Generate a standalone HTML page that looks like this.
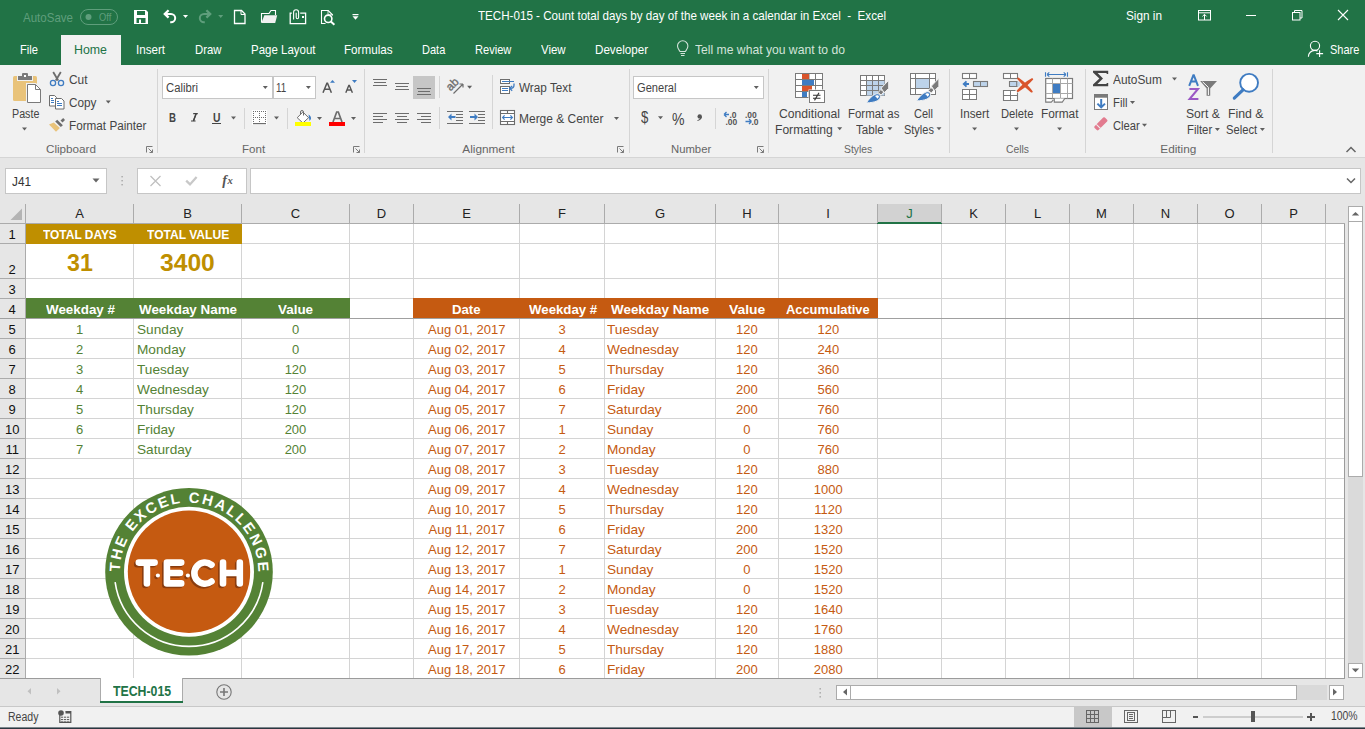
<!DOCTYPE html><html><head><meta charset="utf-8"><style>
html,body{margin:0;padding:0}
body{width:1365px;height:729px;position:relative;overflow:hidden;background:#fff;font-family:"Liberation Sans",sans-serif;-webkit-font-smoothing:antialiased}
body>div,body>svg{position:absolute}
.t{position:absolute;white-space:pre}
</style></head><body>
<div style="left:0px;top:0px;width:1365px;height:65px;background:#217346;"></div>
<div class="t" style="left:23.00px;top:10.90px;font-size:13px;line-height:13px;color:#5f9e7c;transform:scaleX(0.8873);transform-origin:0 0;">AutoSave</div>
<div class="t" style="left:99.40px;top:12.73px;font-size:10px;line-height:10px;color:#5f9e7c;transform:scaleX(0.9318);transform-origin:0 0;">Off</div>
<div class="t" style="left:478.00px;top:9.40px;font-size:13px;line-height:13px;color:#ffffff;transform:scaleX(0.8935);transform-origin:0 0;">TECH-015 - Count total days by day of the week in a calendar in Excel  -  Excel</div>
<div class="t" style="left:1126.00px;top:9.40px;font-size:13px;line-height:13px;color:#ffffff;transform:scaleX(0.9057);transform-origin:0 0;">Sign in</div>
<div style="left:61px;top:35px;width:60px;height:30px;background:#f1f1f1;"></div>
<div class="t" style="left:20.00px;top:42.90px;font-size:13px;line-height:13px;color:#ffffff;transform:scaleX(0.8592);transform-origin:0 0;">File</div>
<div class="t" style="left:74.00px;top:42.90px;font-size:13px;line-height:13px;color:#217346;transform:scaleX(0.9510);transform-origin:0 0;">Home</div>
<div class="t" style="left:136.00px;top:42.90px;font-size:13px;line-height:13px;color:#ffffff;transform:scaleX(0.8923);transform-origin:0 0;">Insert</div>
<div class="t" style="left:194.50px;top:42.90px;font-size:13px;line-height:13px;color:#ffffff;transform:scaleX(0.8717);transform-origin:0 0;">Draw</div>
<div class="t" style="left:250.50px;top:42.90px;font-size:13px;line-height:13px;color:#ffffff;transform:scaleX(0.8836);transform-origin:0 0;">Page Layout</div>
<div class="t" style="left:344.00px;top:42.90px;font-size:13px;line-height:13px;color:#ffffff;transform:scaleX(0.8967);transform-origin:0 0;">Formulas</div>
<div class="t" style="left:422.30px;top:42.90px;font-size:13px;line-height:13px;color:#ffffff;transform:scaleX(0.8473);transform-origin:0 0;">Data</div>
<div class="t" style="left:475.40px;top:42.90px;font-size:13px;line-height:13px;color:#ffffff;transform:scaleX(0.8525);transform-origin:0 0;">Review</div>
<div class="t" style="left:541.00px;top:42.90px;font-size:13px;line-height:13px;color:#ffffff;transform:scaleX(0.8821);transform-origin:0 0;">View</div>
<div class="t" style="left:595.00px;top:42.90px;font-size:13px;line-height:13px;color:#ffffff;transform:scaleX(0.8945);transform-origin:0 0;">Developer</div>
<div class="t" style="left:694.50px;top:42.90px;font-size:13px;line-height:13px;color:#d3e3da;transform:scaleX(0.9345);transform-origin:0 0;">Tell me what you want to do</div>
<div class="t" style="left:1330.00px;top:42.90px;font-size:13px;line-height:13px;color:#ffffff;transform:scaleX(0.8444);transform-origin:0 0;">Share</div>
<div style="left:0px;top:65px;width:1365px;height:92px;background:#f1f1f1;"></div>
<div style="left:0px;top:157px;width:1365px;height:1px;background:#d5d5d5;"></div>
<div style="left:0px;top:158px;width:1365px;height:46px;background:#e6e6e6;"></div>
<div style="left:5px;top:168px;width:102px;height:26px;background:#fff;border:1px solid #c6c6c6;box-sizing:border-box"></div>
<div style="left:137px;top:168px;width:110px;height:26px;background:#fff;border:1px solid #c6c6c6;box-sizing:border-box"></div>
<div style="left:250px;top:168px;width:111px;height:26px;background:#fff;border:1px solid #c6c6c6;box-sizing:border-box;width:1111px"></div>
<div class="t" style="left:12.00px;top:175.00px;font-size:13px;line-height:13px;color:#333;transform:scaleX(0.9069);transform-origin:0 0;">J41</div>
<div style="left:0px;top:204px;width:1348px;height:19px;background:#e6e6e6;"></div>
<div style="left:877px;top:204px;width:64px;height:19px;background:#d2d2d2;"></div>
<div style="left:0px;top:223px;width:1345px;height:1px;background:#ababab;"></div>
<div style="left:877px;top:222px;width:65px;height:2px;background:#217346;"></div>
<div style="left:0px;top:224px;width:25px;height:454px;background:#e6e6e6;"></div>
<div style="left:25px;top:204px;width:1px;height:474px;background:#ababab;"></div>
<div style="left:26px;top:224px;width:1318px;height:454px;background:#fff;"></div>
<div style="left:133px;top:224px;width:1px;height:454px;background:#d4d4d4;"></div>
<div style="left:133px;top:204px;width:1px;height:19px;background:#ababab;"></div>
<div style="left:241px;top:224px;width:1px;height:454px;background:#d4d4d4;"></div>
<div style="left:241px;top:204px;width:1px;height:19px;background:#ababab;"></div>
<div style="left:349px;top:224px;width:1px;height:454px;background:#d4d4d4;"></div>
<div style="left:349px;top:204px;width:1px;height:19px;background:#ababab;"></div>
<div style="left:413px;top:224px;width:1px;height:454px;background:#d4d4d4;"></div>
<div style="left:413px;top:204px;width:1px;height:19px;background:#ababab;"></div>
<div style="left:519px;top:224px;width:1px;height:454px;background:#d4d4d4;"></div>
<div style="left:519px;top:204px;width:1px;height:19px;background:#ababab;"></div>
<div style="left:604px;top:224px;width:1px;height:454px;background:#d4d4d4;"></div>
<div style="left:604px;top:204px;width:1px;height:19px;background:#ababab;"></div>
<div style="left:715px;top:224px;width:1px;height:454px;background:#d4d4d4;"></div>
<div style="left:715px;top:204px;width:1px;height:19px;background:#ababab;"></div>
<div style="left:778px;top:224px;width:1px;height:454px;background:#d4d4d4;"></div>
<div style="left:778px;top:204px;width:1px;height:19px;background:#ababab;"></div>
<div style="left:877px;top:224px;width:1px;height:454px;background:#d4d4d4;"></div>
<div style="left:877px;top:204px;width:1px;height:19px;background:#ababab;"></div>
<div style="left:941px;top:224px;width:1px;height:454px;background:#d4d4d4;"></div>
<div style="left:941px;top:204px;width:1px;height:19px;background:#ababab;"></div>
<div style="left:1005px;top:224px;width:1px;height:454px;background:#d4d4d4;"></div>
<div style="left:1005px;top:204px;width:1px;height:19px;background:#ababab;"></div>
<div style="left:1069px;top:224px;width:1px;height:454px;background:#d4d4d4;"></div>
<div style="left:1069px;top:204px;width:1px;height:19px;background:#ababab;"></div>
<div style="left:1133px;top:224px;width:1px;height:454px;background:#d4d4d4;"></div>
<div style="left:1133px;top:204px;width:1px;height:19px;background:#ababab;"></div>
<div style="left:1197px;top:224px;width:1px;height:454px;background:#d4d4d4;"></div>
<div style="left:1197px;top:204px;width:1px;height:19px;background:#ababab;"></div>
<div style="left:1261px;top:224px;width:1px;height:454px;background:#d4d4d4;"></div>
<div style="left:1261px;top:204px;width:1px;height:19px;background:#ababab;"></div>
<div style="left:1325px;top:224px;width:1px;height:454px;background:#d4d4d4;"></div>
<div style="left:1325px;top:204px;width:1px;height:19px;background:#ababab;"></div>
<div style="left:26px;top:243px;width:1318px;height:1px;background:#d4d4d4;"></div>
<div style="left:0px;top:243px;width:25px;height:1px;background:#ababab;"></div>
<div style="left:26px;top:278px;width:1318px;height:1px;background:#d4d4d4;"></div>
<div style="left:0px;top:278px;width:25px;height:1px;background:#ababab;"></div>
<div style="left:26px;top:298px;width:1318px;height:1px;background:#d4d4d4;"></div>
<div style="left:0px;top:298px;width:25px;height:1px;background:#ababab;"></div>
<div style="left:26px;top:318px;width:1318px;height:1px;background:#d4d4d4;"></div>
<div style="left:0px;top:318px;width:25px;height:1px;background:#ababab;"></div>
<div style="left:26px;top:338px;width:1318px;height:1px;background:#d4d4d4;"></div>
<div style="left:0px;top:338px;width:25px;height:1px;background:#ababab;"></div>
<div style="left:26px;top:358px;width:1318px;height:1px;background:#d4d4d4;"></div>
<div style="left:0px;top:358px;width:25px;height:1px;background:#ababab;"></div>
<div style="left:26px;top:378px;width:1318px;height:1px;background:#d4d4d4;"></div>
<div style="left:0px;top:378px;width:25px;height:1px;background:#ababab;"></div>
<div style="left:26px;top:398px;width:1318px;height:1px;background:#d4d4d4;"></div>
<div style="left:0px;top:398px;width:25px;height:1px;background:#ababab;"></div>
<div style="left:26px;top:418px;width:1318px;height:1px;background:#d4d4d4;"></div>
<div style="left:0px;top:418px;width:25px;height:1px;background:#ababab;"></div>
<div style="left:26px;top:438px;width:1318px;height:1px;background:#d4d4d4;"></div>
<div style="left:0px;top:438px;width:25px;height:1px;background:#ababab;"></div>
<div style="left:26px;top:458px;width:1318px;height:1px;background:#d4d4d4;"></div>
<div style="left:0px;top:458px;width:25px;height:1px;background:#ababab;"></div>
<div style="left:26px;top:478px;width:1318px;height:1px;background:#d4d4d4;"></div>
<div style="left:0px;top:478px;width:25px;height:1px;background:#ababab;"></div>
<div style="left:26px;top:498px;width:1318px;height:1px;background:#d4d4d4;"></div>
<div style="left:0px;top:498px;width:25px;height:1px;background:#ababab;"></div>
<div style="left:26px;top:518px;width:1318px;height:1px;background:#d4d4d4;"></div>
<div style="left:0px;top:518px;width:25px;height:1px;background:#ababab;"></div>
<div style="left:26px;top:538px;width:1318px;height:1px;background:#d4d4d4;"></div>
<div style="left:0px;top:538px;width:25px;height:1px;background:#ababab;"></div>
<div style="left:26px;top:558px;width:1318px;height:1px;background:#d4d4d4;"></div>
<div style="left:0px;top:558px;width:25px;height:1px;background:#ababab;"></div>
<div style="left:26px;top:578px;width:1318px;height:1px;background:#d4d4d4;"></div>
<div style="left:0px;top:578px;width:25px;height:1px;background:#ababab;"></div>
<div style="left:26px;top:598px;width:1318px;height:1px;background:#d4d4d4;"></div>
<div style="left:0px;top:598px;width:25px;height:1px;background:#ababab;"></div>
<div style="left:26px;top:618px;width:1318px;height:1px;background:#d4d4d4;"></div>
<div style="left:0px;top:618px;width:25px;height:1px;background:#ababab;"></div>
<div style="left:26px;top:638px;width:1318px;height:1px;background:#d4d4d4;"></div>
<div style="left:0px;top:638px;width:25px;height:1px;background:#ababab;"></div>
<div style="left:26px;top:658px;width:1318px;height:1px;background:#d4d4d4;"></div>
<div style="left:0px;top:658px;width:25px;height:1px;background:#ababab;"></div>
<div style="left:26px;top:678px;width:1318px;height:1px;background:#d4d4d4;"></div>
<div style="left:0px;top:678px;width:25px;height:1px;background:#ababab;"></div>
<div style="left:1344px;top:224px;width:1px;height:455px;background:#9b9b9b;"></div>
<div style="left:0px;top:678px;width:1345px;height:1px;background:#9b9b9b;"></div>
<div style="left:0px;top:318px;width:1345px;height:1px;background:#a0a0a0;"></div>
<div class="t" style="left:75.17px;top:207.00px;font-size:13px;line-height:13px;color:#222;">A</div>
<div class="t" style="left:183.18px;top:207.00px;font-size:13px;line-height:13px;color:#222;">B</div>
<div class="t" style="left:290.80px;top:207.00px;font-size:13px;line-height:13px;color:#222;">C</div>
<div class="t" style="left:376.80px;top:207.00px;font-size:13px;line-height:13px;color:#222;">D</div>
<div class="t" style="left:462.18px;top:207.00px;font-size:13px;line-height:13px;color:#222;">E</div>
<div class="t" style="left:558.02px;top:207.00px;font-size:13px;line-height:13px;color:#222;">F</div>
<div class="t" style="left:654.95px;top:207.00px;font-size:13px;line-height:13px;color:#222;">G</div>
<div class="t" style="left:742.30px;top:207.00px;font-size:13px;line-height:13px;color:#222;">H</div>
<div class="t" style="left:826.20px;top:207.00px;font-size:13px;line-height:13px;color:#222;">I</div>
<div class="t" style="left:906.25px;top:207.00px;font-size:13px;line-height:13px;color:#217346;">J</div>
<div class="t" style="left:969.17px;top:207.00px;font-size:13px;line-height:13px;color:#222;">K</div>
<div class="t" style="left:1033.88px;top:207.00px;font-size:13px;line-height:13px;color:#222;">L</div>
<div class="t" style="left:1096.08px;top:207.00px;font-size:13px;line-height:13px;color:#222;">M</div>
<div class="t" style="left:1160.80px;top:207.00px;font-size:13px;line-height:13px;color:#222;">N</div>
<div class="t" style="left:1224.45px;top:207.00px;font-size:13px;line-height:13px;color:#222;">O</div>
<div class="t" style="left:1289.17px;top:207.00px;font-size:13px;line-height:13px;color:#222;">P</div>
<div class="t" style="left:8.57px;top:227.50px;font-size:13px;line-height:13px;color:#111;">1</div>
<div class="t" style="left:8.57px;top:262.50px;font-size:13px;line-height:13px;color:#111;">2</div>
<div class="t" style="left:8.57px;top:282.50px;font-size:13px;line-height:13px;color:#111;">3</div>
<div class="t" style="left:8.57px;top:302.50px;font-size:13px;line-height:13px;color:#111;">4</div>
<div class="t" style="left:8.57px;top:322.50px;font-size:13px;line-height:13px;color:#111;">5</div>
<div class="t" style="left:8.57px;top:342.50px;font-size:13px;line-height:13px;color:#111;">6</div>
<div class="t" style="left:8.57px;top:362.50px;font-size:13px;line-height:13px;color:#111;">7</div>
<div class="t" style="left:8.57px;top:382.50px;font-size:13px;line-height:13px;color:#111;">8</div>
<div class="t" style="left:8.57px;top:402.50px;font-size:13px;line-height:13px;color:#111;">9</div>
<div class="t" style="left:4.97px;top:422.50px;font-size:13px;line-height:13px;color:#111;">10</div>
<div class="t" style="left:5.45px;top:442.50px;font-size:13px;line-height:13px;color:#111;">11</div>
<div class="t" style="left:4.97px;top:462.50px;font-size:13px;line-height:13px;color:#111;">12</div>
<div class="t" style="left:4.97px;top:482.50px;font-size:13px;line-height:13px;color:#111;">13</div>
<div class="t" style="left:4.97px;top:502.50px;font-size:13px;line-height:13px;color:#111;">14</div>
<div class="t" style="left:4.97px;top:522.50px;font-size:13px;line-height:13px;color:#111;">15</div>
<div class="t" style="left:4.97px;top:542.50px;font-size:13px;line-height:13px;color:#111;">16</div>
<div class="t" style="left:4.97px;top:562.50px;font-size:13px;line-height:13px;color:#111;">17</div>
<div class="t" style="left:4.97px;top:582.50px;font-size:13px;line-height:13px;color:#111;">18</div>
<div class="t" style="left:4.97px;top:602.50px;font-size:13px;line-height:13px;color:#111;">19</div>
<div class="t" style="left:4.97px;top:622.50px;font-size:13px;line-height:13px;color:#111;">20</div>
<div class="t" style="left:4.97px;top:642.50px;font-size:13px;line-height:13px;color:#111;">21</div>
<div class="t" style="left:4.97px;top:662.50px;font-size:13px;line-height:13px;color:#111;">22</div>
<div style="left:26px;top:224px;width:216px;height:20px;background:#bf8f00;"></div>
<div style="left:26px;top:298px;width:324px;height:20px;background:#548235;"></div>
<div style="left:413px;top:298px;width:465px;height:20px;background:#c55a11;"></div>
<div class="t" style="left:42.70px;top:228.00px;font-size:13px;line-height:13px;color:#ffffff;font-weight:bold;transform:scaleX(0.9179);transform-origin:0 0;">TOTAL DAYS</div>
<div class="t" style="left:146.70px;top:228.00px;font-size:13px;line-height:13px;color:#ffffff;font-weight:bold;transform:scaleX(0.9278);transform-origin:0 0;">TOTAL VALUE</div>
<div class="t" style="left:66.60px;top:250.68px;font-size:24px;line-height:24px;color:#bf8f00;font-weight:bold;transform:scaleX(0.9663);transform-origin:0 0;">31</div>
<div class="t" style="left:160.40px;top:250.68px;font-size:24px;line-height:24px;color:#bf8f00;font-weight:bold;transform:scaleX(1.0262);transform-origin:0 0;">3400</div>
<div class="t" style="left:45.60px;top:303.00px;font-size:13px;line-height:13px;color:#ffffff;font-weight:bold;transform:scaleX(1.0291);transform-origin:0 0;">Weekday #</div>
<div class="t" style="left:138.60px;top:303.00px;font-size:13px;line-height:13px;color:#ffffff;font-weight:bold;transform:scaleX(1.0300);transform-origin:0 0;">Weekday Name</div>
<div class="t" style="left:278.40px;top:303.00px;font-size:13px;line-height:13px;color:#ffffff;font-weight:bold;transform:scaleX(1.0309);transform-origin:0 0;">Value</div>
<div class="t" style="left:75.88px;top:323.00px;font-size:13px;line-height:13px;color:#548235;">1</div>
<div class="t" style="left:136.50px;top:323.00px;font-size:13px;line-height:13px;color:#548235;transform:scaleX(1.0500);transform-origin:0 0;">Sunday</div>
<div class="t" style="left:291.88px;top:323.00px;font-size:13px;line-height:13px;color:#548235;">0</div>
<div class="t" style="left:75.88px;top:343.00px;font-size:13px;line-height:13px;color:#548235;">2</div>
<div class="t" style="left:136.50px;top:343.00px;font-size:13px;line-height:13px;color:#548235;transform:scaleX(1.0500);transform-origin:0 0;">Monday</div>
<div class="t" style="left:291.88px;top:343.00px;font-size:13px;line-height:13px;color:#548235;">0</div>
<div class="t" style="left:75.88px;top:363.00px;font-size:13px;line-height:13px;color:#548235;">3</div>
<div class="t" style="left:136.50px;top:363.00px;font-size:13px;line-height:13px;color:#548235;transform:scaleX(1.0500);transform-origin:0 0;">Tuesday</div>
<div class="t" style="left:284.65px;top:363.00px;font-size:13px;line-height:13px;color:#548235;">120</div>
<div class="t" style="left:75.88px;top:383.00px;font-size:13px;line-height:13px;color:#548235;">4</div>
<div class="t" style="left:136.50px;top:383.00px;font-size:13px;line-height:13px;color:#548235;transform:scaleX(1.0500);transform-origin:0 0;">Wednesday</div>
<div class="t" style="left:284.65px;top:383.00px;font-size:13px;line-height:13px;color:#548235;">120</div>
<div class="t" style="left:75.88px;top:403.00px;font-size:13px;line-height:13px;color:#548235;">5</div>
<div class="t" style="left:136.50px;top:403.00px;font-size:13px;line-height:13px;color:#548235;transform:scaleX(1.0500);transform-origin:0 0;">Thursday</div>
<div class="t" style="left:284.65px;top:403.00px;font-size:13px;line-height:13px;color:#548235;">120</div>
<div class="t" style="left:75.88px;top:423.00px;font-size:13px;line-height:13px;color:#548235;">6</div>
<div class="t" style="left:136.50px;top:423.00px;font-size:13px;line-height:13px;color:#548235;transform:scaleX(1.0500);transform-origin:0 0;">Friday</div>
<div class="t" style="left:284.65px;top:423.00px;font-size:13px;line-height:13px;color:#548235;">200</div>
<div class="t" style="left:75.88px;top:443.00px;font-size:13px;line-height:13px;color:#548235;">7</div>
<div class="t" style="left:136.50px;top:443.00px;font-size:13px;line-height:13px;color:#548235;transform:scaleX(1.0500);transform-origin:0 0;">Saturday</div>
<div class="t" style="left:284.65px;top:443.00px;font-size:13px;line-height:13px;color:#548235;">200</div>
<div class="t" style="left:452.00px;top:303.00px;font-size:13px;line-height:13px;color:#ffffff;font-weight:bold;transform:scaleX(1.0142);transform-origin:0 0;">Date</div>
<div class="t" style="left:528.80px;top:303.00px;font-size:13px;line-height:13px;color:#ffffff;font-weight:bold;transform:scaleX(1.0187);transform-origin:0 0;">Weekday #</div>
<div class="t" style="left:611.40px;top:303.00px;font-size:13px;line-height:13px;color:#ffffff;font-weight:bold;transform:scaleX(1.0321);transform-origin:0 0;">Weekday Name</div>
<div class="t" style="left:728.50px;top:303.00px;font-size:13px;line-height:13px;color:#ffffff;font-weight:bold;transform:scaleX(1.0663);transform-origin:0 0;">Value</div>
<div class="t" style="left:786.00px;top:303.00px;font-size:13px;line-height:13px;color:#ffffff;font-weight:bold;transform:scaleX(0.9899);transform-origin:0 0;">Accumulative</div>
<div class="t" style="left:428.12px;top:323.00px;font-size:13px;line-height:13px;color:#c55a11;">Aug 01, 2017</div>
<div class="t" style="left:558.38px;top:323.00px;font-size:13px;line-height:13px;color:#c55a11;">3</div>
<div class="t" style="left:607.00px;top:323.00px;font-size:13px;line-height:13px;color:#c55a11;transform:scaleX(1.0500);transform-origin:0 0;">Tuesday</div>
<div class="t" style="left:736.05px;top:323.00px;font-size:13px;line-height:13px;color:#c55a11;">120</div>
<div class="t" style="left:817.45px;top:323.00px;font-size:13px;line-height:13px;color:#c55a11;">120</div>
<div class="t" style="left:428.12px;top:343.00px;font-size:13px;line-height:13px;color:#c55a11;">Aug 02, 2017</div>
<div class="t" style="left:558.38px;top:343.00px;font-size:13px;line-height:13px;color:#c55a11;">4</div>
<div class="t" style="left:607.00px;top:343.00px;font-size:13px;line-height:13px;color:#c55a11;transform:scaleX(1.0500);transform-origin:0 0;">Wednesday</div>
<div class="t" style="left:736.05px;top:343.00px;font-size:13px;line-height:13px;color:#c55a11;">120</div>
<div class="t" style="left:817.45px;top:343.00px;font-size:13px;line-height:13px;color:#c55a11;">240</div>
<div class="t" style="left:428.12px;top:363.00px;font-size:13px;line-height:13px;color:#c55a11;">Aug 03, 2017</div>
<div class="t" style="left:558.38px;top:363.00px;font-size:13px;line-height:13px;color:#c55a11;">5</div>
<div class="t" style="left:607.00px;top:363.00px;font-size:13px;line-height:13px;color:#c55a11;transform:scaleX(1.0500);transform-origin:0 0;">Thursday</div>
<div class="t" style="left:736.05px;top:363.00px;font-size:13px;line-height:13px;color:#c55a11;">120</div>
<div class="t" style="left:817.45px;top:363.00px;font-size:13px;line-height:13px;color:#c55a11;">360</div>
<div class="t" style="left:428.12px;top:383.00px;font-size:13px;line-height:13px;color:#c55a11;">Aug 04, 2017</div>
<div class="t" style="left:558.38px;top:383.00px;font-size:13px;line-height:13px;color:#c55a11;">6</div>
<div class="t" style="left:607.00px;top:383.00px;font-size:13px;line-height:13px;color:#c55a11;transform:scaleX(1.0500);transform-origin:0 0;">Friday</div>
<div class="t" style="left:736.05px;top:383.00px;font-size:13px;line-height:13px;color:#c55a11;">200</div>
<div class="t" style="left:817.45px;top:383.00px;font-size:13px;line-height:13px;color:#c55a11;">560</div>
<div class="t" style="left:428.12px;top:403.00px;font-size:13px;line-height:13px;color:#c55a11;">Aug 05, 2017</div>
<div class="t" style="left:558.38px;top:403.00px;font-size:13px;line-height:13px;color:#c55a11;">7</div>
<div class="t" style="left:607.00px;top:403.00px;font-size:13px;line-height:13px;color:#c55a11;transform:scaleX(1.0500);transform-origin:0 0;">Saturday</div>
<div class="t" style="left:736.05px;top:403.00px;font-size:13px;line-height:13px;color:#c55a11;">200</div>
<div class="t" style="left:817.45px;top:403.00px;font-size:13px;line-height:13px;color:#c55a11;">760</div>
<div class="t" style="left:428.12px;top:423.00px;font-size:13px;line-height:13px;color:#c55a11;">Aug 06, 2017</div>
<div class="t" style="left:558.38px;top:423.00px;font-size:13px;line-height:13px;color:#c55a11;">1</div>
<div class="t" style="left:607.00px;top:423.00px;font-size:13px;line-height:13px;color:#c55a11;transform:scaleX(1.0500);transform-origin:0 0;">Sunday</div>
<div class="t" style="left:743.27px;top:423.00px;font-size:13px;line-height:13px;color:#c55a11;">0</div>
<div class="t" style="left:817.45px;top:423.00px;font-size:13px;line-height:13px;color:#c55a11;">760</div>
<div class="t" style="left:428.12px;top:443.00px;font-size:13px;line-height:13px;color:#c55a11;">Aug 07, 2017</div>
<div class="t" style="left:558.38px;top:443.00px;font-size:13px;line-height:13px;color:#c55a11;">2</div>
<div class="t" style="left:607.00px;top:443.00px;font-size:13px;line-height:13px;color:#c55a11;transform:scaleX(1.0500);transform-origin:0 0;">Monday</div>
<div class="t" style="left:743.27px;top:443.00px;font-size:13px;line-height:13px;color:#c55a11;">0</div>
<div class="t" style="left:817.45px;top:443.00px;font-size:13px;line-height:13px;color:#c55a11;">760</div>
<div class="t" style="left:428.12px;top:463.00px;font-size:13px;line-height:13px;color:#c55a11;">Aug 08, 2017</div>
<div class="t" style="left:558.38px;top:463.00px;font-size:13px;line-height:13px;color:#c55a11;">3</div>
<div class="t" style="left:607.00px;top:463.00px;font-size:13px;line-height:13px;color:#c55a11;transform:scaleX(1.0500);transform-origin:0 0;">Tuesday</div>
<div class="t" style="left:736.05px;top:463.00px;font-size:13px;line-height:13px;color:#c55a11;">120</div>
<div class="t" style="left:817.45px;top:463.00px;font-size:13px;line-height:13px;color:#c55a11;">880</div>
<div class="t" style="left:428.12px;top:483.00px;font-size:13px;line-height:13px;color:#c55a11;">Aug 09, 2017</div>
<div class="t" style="left:558.38px;top:483.00px;font-size:13px;line-height:13px;color:#c55a11;">4</div>
<div class="t" style="left:607.00px;top:483.00px;font-size:13px;line-height:13px;color:#c55a11;transform:scaleX(1.0500);transform-origin:0 0;">Wednesday</div>
<div class="t" style="left:736.05px;top:483.00px;font-size:13px;line-height:13px;color:#c55a11;">120</div>
<div class="t" style="left:813.85px;top:483.00px;font-size:13px;line-height:13px;color:#c55a11;">1000</div>
<div class="t" style="left:428.12px;top:503.00px;font-size:13px;line-height:13px;color:#c55a11;">Aug 10, 2017</div>
<div class="t" style="left:558.38px;top:503.00px;font-size:13px;line-height:13px;color:#c55a11;">5</div>
<div class="t" style="left:607.00px;top:503.00px;font-size:13px;line-height:13px;color:#c55a11;transform:scaleX(1.0500);transform-origin:0 0;">Thursday</div>
<div class="t" style="left:736.05px;top:503.00px;font-size:13px;line-height:13px;color:#c55a11;">120</div>
<div class="t" style="left:814.32px;top:503.00px;font-size:13px;line-height:13px;color:#c55a11;">1120</div>
<div class="t" style="left:428.60px;top:523.00px;font-size:13px;line-height:13px;color:#c55a11;">Aug 11, 2017</div>
<div class="t" style="left:558.38px;top:523.00px;font-size:13px;line-height:13px;color:#c55a11;">6</div>
<div class="t" style="left:607.00px;top:523.00px;font-size:13px;line-height:13px;color:#c55a11;transform:scaleX(1.0500);transform-origin:0 0;">Friday</div>
<div class="t" style="left:736.05px;top:523.00px;font-size:13px;line-height:13px;color:#c55a11;">200</div>
<div class="t" style="left:813.85px;top:523.00px;font-size:13px;line-height:13px;color:#c55a11;">1320</div>
<div class="t" style="left:428.12px;top:543.00px;font-size:13px;line-height:13px;color:#c55a11;">Aug 12, 2017</div>
<div class="t" style="left:558.38px;top:543.00px;font-size:13px;line-height:13px;color:#c55a11;">7</div>
<div class="t" style="left:607.00px;top:543.00px;font-size:13px;line-height:13px;color:#c55a11;transform:scaleX(1.0500);transform-origin:0 0;">Saturday</div>
<div class="t" style="left:736.05px;top:543.00px;font-size:13px;line-height:13px;color:#c55a11;">200</div>
<div class="t" style="left:813.85px;top:543.00px;font-size:13px;line-height:13px;color:#c55a11;">1520</div>
<div class="t" style="left:428.12px;top:563.00px;font-size:13px;line-height:13px;color:#c55a11;">Aug 13, 2017</div>
<div class="t" style="left:558.38px;top:563.00px;font-size:13px;line-height:13px;color:#c55a11;">1</div>
<div class="t" style="left:607.00px;top:563.00px;font-size:13px;line-height:13px;color:#c55a11;transform:scaleX(1.0500);transform-origin:0 0;">Sunday</div>
<div class="t" style="left:743.27px;top:563.00px;font-size:13px;line-height:13px;color:#c55a11;">0</div>
<div class="t" style="left:813.85px;top:563.00px;font-size:13px;line-height:13px;color:#c55a11;">1520</div>
<div class="t" style="left:428.12px;top:583.00px;font-size:13px;line-height:13px;color:#c55a11;">Aug 14, 2017</div>
<div class="t" style="left:558.38px;top:583.00px;font-size:13px;line-height:13px;color:#c55a11;">2</div>
<div class="t" style="left:607.00px;top:583.00px;font-size:13px;line-height:13px;color:#c55a11;transform:scaleX(1.0500);transform-origin:0 0;">Monday</div>
<div class="t" style="left:743.27px;top:583.00px;font-size:13px;line-height:13px;color:#c55a11;">0</div>
<div class="t" style="left:813.85px;top:583.00px;font-size:13px;line-height:13px;color:#c55a11;">1520</div>
<div class="t" style="left:428.12px;top:603.00px;font-size:13px;line-height:13px;color:#c55a11;">Aug 15, 2017</div>
<div class="t" style="left:558.38px;top:603.00px;font-size:13px;line-height:13px;color:#c55a11;">3</div>
<div class="t" style="left:607.00px;top:603.00px;font-size:13px;line-height:13px;color:#c55a11;transform:scaleX(1.0500);transform-origin:0 0;">Tuesday</div>
<div class="t" style="left:736.05px;top:603.00px;font-size:13px;line-height:13px;color:#c55a11;">120</div>
<div class="t" style="left:813.85px;top:603.00px;font-size:13px;line-height:13px;color:#c55a11;">1640</div>
<div class="t" style="left:428.12px;top:623.00px;font-size:13px;line-height:13px;color:#c55a11;">Aug 16, 2017</div>
<div class="t" style="left:558.38px;top:623.00px;font-size:13px;line-height:13px;color:#c55a11;">4</div>
<div class="t" style="left:607.00px;top:623.00px;font-size:13px;line-height:13px;color:#c55a11;transform:scaleX(1.0500);transform-origin:0 0;">Wednesday</div>
<div class="t" style="left:736.05px;top:623.00px;font-size:13px;line-height:13px;color:#c55a11;">120</div>
<div class="t" style="left:813.85px;top:623.00px;font-size:13px;line-height:13px;color:#c55a11;">1760</div>
<div class="t" style="left:428.12px;top:643.00px;font-size:13px;line-height:13px;color:#c55a11;">Aug 17, 2017</div>
<div class="t" style="left:558.38px;top:643.00px;font-size:13px;line-height:13px;color:#c55a11;">5</div>
<div class="t" style="left:607.00px;top:643.00px;font-size:13px;line-height:13px;color:#c55a11;transform:scaleX(1.0500);transform-origin:0 0;">Thursday</div>
<div class="t" style="left:736.05px;top:643.00px;font-size:13px;line-height:13px;color:#c55a11;">120</div>
<div class="t" style="left:813.85px;top:643.00px;font-size:13px;line-height:13px;color:#c55a11;">1880</div>
<div class="t" style="left:428.12px;top:663.00px;font-size:13px;line-height:13px;color:#c55a11;">Aug 18, 2017</div>
<div class="t" style="left:558.38px;top:663.00px;font-size:13px;line-height:13px;color:#c55a11;">6</div>
<div class="t" style="left:607.00px;top:663.00px;font-size:13px;line-height:13px;color:#c55a11;transform:scaleX(1.0500);transform-origin:0 0;">Friday</div>
<div class="t" style="left:736.05px;top:663.00px;font-size:13px;line-height:13px;color:#c55a11;">200</div>
<div class="t" style="left:813.85px;top:663.00px;font-size:13px;line-height:13px;color:#c55a11;">2080</div>
<div style="left:1345px;top:204px;width:20px;height:475px;background:#e6e6e6;"></div>
<div style="left:1348px;top:476px;width:15px;height:187px;background:#dadada;"></div>
<div style="left:1348px;top:206px;width:15px;height:16px;background:#fff;border:1px solid #ababab;box-sizing:border-box"></div>
<div style="left:1348px;top:221px;width:15px;height:256px;background:#fff;border:1px solid #ababab;box-sizing:border-box"></div>
<div style="left:1348px;top:663px;width:15px;height:15px;background:#fff;border:1px solid #ababab;box-sizing:border-box"></div>
<div style="left:0px;top:679px;width:1365px;height:27px;background:#e6e6e6;"></div>
<div style="left:0px;top:706px;width:1365px;height:1px;background:#c8c8c8;"></div>
<div style="left:100px;top:678px;width:83px;height:25px;background:#fff;border-left:1px solid #ababab;border-right:1px solid #ababab;box-sizing:border-box"></div>
<div style="left:100px;top:701px;width:83px;height:2px;background:#217346;"></div>
<div class="t" style="left:112.60px;top:684.15px;font-size:14px;line-height:14px;color:#217346;font-weight:bold;transform:scaleX(0.8783);transform-origin:0 0;">TECH-015</div>
<div style="left:836px;top:685px;width:15px;height:15px;background:#fff;border:1px solid #ababab;box-sizing:border-box"></div>
<div style="left:850px;top:685px;width:447px;height:15px;background:#fff;border:1px solid #ababab;box-sizing:border-box"></div>
<div style="left:1297px;top:685px;width:30px;height:15px;background:#d9d9d9;"></div>
<div style="left:1329px;top:685px;width:15px;height:15px;background:#fff;border:1px solid #ababab;box-sizing:border-box"></div>
<div style="left:0px;top:707px;width:1365px;height:21px;background:#f1f1f1;"></div>
<div style="left:0px;top:727px;width:1365px;height:1px;background:#7d868c;"></div>
<div style="left:0px;top:728px;width:1365px;height:1px;background:#2b3740;"></div>
<div class="t" style="left:7.60px;top:711.22px;font-size:12.5px;line-height:12.5px;color:#444;transform:scaleX(0.8437);transform-origin:0 0;">Ready</div>
<div style="left:1074px;top:707px;width:38px;height:20px;background:#c8c8c8;"></div>
<div class="t" style="left:1331.00px;top:710.02px;font-size:12.5px;line-height:12.5px;color:#444;transform:scaleX(0.8326);transform-origin:0 0;">100%</div>
<svg style="position:absolute;left:0;top:0" width="1365" height="729" viewBox="0 0 1365 729"><rect x="80.5" y="9.5" width="37" height="15" rx="7.5" fill="none" stroke="#5f9e7c" stroke-width="1"/><circle cx="88.5" cy="17" r="3" fill="#5f9e7c"/><path d="M134 10h12l2 2v12h-14z" fill="#ffffff"/><rect x="137" y="11" width="8" height="4" fill="#217346"/><rect x="136.5" y="18" width="9" height="5" fill="#217346"/><rect x="139" y="19.5" width="2" height="3.5" fill="#ffffff"/><path d="M164.5 13.9H171a4.2 4.2 0 0 1 0 8.4h-0.8" fill="none" stroke="#ffffff" stroke-width="2"/><path d="M168.6 10.2L164.8 13.9L168.6 17.6" fill="none" stroke="#ffffff" stroke-width="2.3"/><path d="M183.0 15.0h5l-2.5 3z" fill="#ffffff"/><path d="M210.5 13.9H204a4.2 4.2 0 0 0 0 8.4h0.8" fill="none" stroke="#5f9e7c" stroke-width="2"/><path d="M206.4 10.2L210.2 13.9L206.4 17.6" fill="none" stroke="#5f9e7c" stroke-width="2.3"/><path d="M218.2 15.0h5l-2.5 3z" fill="#5f9e7c"/><path d="M234.5 10.5h7l3.5 3.5v9.5h-10.5z" fill="none" stroke="#ffffff" stroke-width="1.3"/><path d="M241 10.5v4h4" fill="none" stroke="#ffffff" stroke-width="1"/><path d="M261.5 22.5V13.5H269L271 10.5H275.5V15" fill="none" stroke="#ffffff" stroke-width="1.1"/><path d="M264.3 15.3H277.2L275.2 22.9H261.3Z" fill="#f0f0f0"/><path d="M300.2 13.2H305.6V23.6H290.2V13.2H291.8" fill="none" stroke="#ffffff" stroke-width="1.3"/><path d="M293.6 19.5V12.3a2.5 2.5 0 0 1 5 0V17.6a1.2 1.2 0 0 1 -2.4 0V12.8" fill="none" stroke="#ffffff" stroke-width="1.1"/><rect x="302" y="16" width="2" height="2" fill="#ffffff"/><path d="M325.5 23.5H321.5V10.5H328.2L332.5 14.8V15.5" fill="none" stroke="#ffffff" stroke-width="1.1"/><path d="M328 10.5V14.8H332.5" fill="none" stroke="#ffffff" stroke-width="0.8"/><circle cx="328.2" cy="18.8" r="3.7" fill="none" stroke="#ffffff" stroke-width="1.6"/><path d="M330.8 21.5l3.6 3.3" stroke="#ffffff" stroke-width="2"/><rect x="352.5" y="14" width="6" height="1.2" fill="#ffffff"/><path d="M352.5 16.25h6l-3.0 3.5z" fill="#ffffff"/><rect x="1198.5" y="10.5" width="12" height="9.5" fill="none" stroke="#ffffff" stroke-width="1"/><path d="M1198.5 12.8h12" stroke="#ffffff" stroke-width="1"/><path d="M1204.5 20v-5.6M1202.4 16.4l2.1-2.1 2.1 2.1" fill="none" stroke="#ffffff" stroke-width="1"/><path d="M1246 15.5h10" stroke="#ffffff" stroke-width="1"/><rect x="1292.5" y="12.5" width="7.5" height="7.5" fill="none" stroke="#ffffff" stroke-width="1"/><path d="M1294.5 12.5v-2h7.5v7.5h-2" fill="none" stroke="#ffffff" stroke-width="1"/><path d="M1338 10l10 10M1348 10l-10 10" stroke="#ffffff" stroke-width="1.1"/><circle cx="1315" cy="45.8" r="4.6" fill="none" stroke="#ffffff" stroke-width="1.1"/><path d="M1308.4 56.8c0-3.6 2.6-6.4 6.6-6.4c1 0 1.9 0.2 2.6 0.5" fill="none" stroke="#ffffff" stroke-width="1.1"/><path d="M1316.3 53.6h6.8M1319.6 50.2v6.8" stroke="#ffffff" stroke-width="1.1"/><path d="M680 51.5c-1-1.5-2.5-3-2.5-5.5a5.2 5.2 0 0 1 10.4 0c0 2.5-1.5 4-2.5 5.5z" fill="none" stroke="#d3e3da" stroke-width="1.1"/><path d="M680.5 53.5h4.5M681 55.5h3.5" stroke="#d3e3da" stroke-width="1"/><rect x="157" y="69" width="1" height="84" fill="#d5d5d5"/><rect x="364" y="69" width="1" height="84" fill="#d5d5d5"/><rect x="629" y="69" width="1" height="84" fill="#d5d5d5"/><rect x="768" y="69" width="1" height="84" fill="#d5d5d5"/><rect x="949" y="69" width="1" height="84" fill="#d5d5d5"/><rect x="1085" y="69" width="1" height="84" fill="#d5d5d5"/><rect x="1272" y="69" width="1" height="84" fill="#d5d5d5"/><rect x="13" y="76" width="24" height="25" rx="1.5" fill="#e9c37a"/><rect x="17" y="75" width="16" height="6" fill="#f1f1f1"/><rect x="18" y="76" width="14" height="4" fill="#7a7a7a"/><rect x="22" y="73" width="6" height="4" rx="1" fill="#7a7a7a"/><rect x="24" y="75" width="2" height="2" fill="#fff"/><path d="M26 83h10l6 6v15h-16z" fill="#f1f1f1"/><path d="M27.5 84.5h8l5 5v13h-13z" fill="#fff" stroke="#7a7a7a" stroke-width="1"/><path d="M35.5 84.5v5h5" fill="none" stroke="#7a7a7a" stroke-width="1"/><path d="M22.0 127.5h5l-2.5 3z" fill="#5f5f5f"/><path d="M53.2 72l5 8.5M60.8 72l-5 8.5" stroke="#6d6d6d" stroke-width="1.8"/><circle cx="53" cy="83" r="2.6" fill="none" stroke="#3f7cc2" stroke-width="1.3"/><circle cx="61" cy="83" r="2.6" fill="none" stroke="#3f7cc2" stroke-width="1.3"/><path d="M49.5 95.5h5l2 2v8.5h-7z" fill="#fff" stroke="#6d6d6d" stroke-width="1"/><path d="M55.5 98.5h6l2.5 2.5v8h-8.5z" fill="#fff" stroke="#6d6d6d" stroke-width="1"/><path d="M51 98.5h2M51 100.5h3M51 102.5h3M57 101.5h2M57 103.5h5M57 105.5h5" stroke="#3f7cc2" stroke-width="1"/><path d="M105.8 100.5h5l-2.5 3z" fill="#5f5f5f"/><path d="M60.5 120.6L63.2 118L65 119.9L62.5 122.6Z" fill="#6d6d6d"/><path d="M55.2 121.6L57.2 119.8L62.9 125.2L60.8 127Z" fill="#6d6d6d"/><path d="M49 124.4L53.8 122.6L59.9 127.9L56 131.8Z" fill="#e9c37a"/><path d="M146.5 152.5V146.5H152.5" fill="none" stroke="#7a7a7a" stroke-width="1"/><path d="M148.5 148.5L152.5 152.5M152.5 149.5V152.5H149.5" fill="none" stroke="#7a7a7a" stroke-width="1"/><rect x="162.5" y="76.5" width="110" height="22" fill="#fff" stroke="#c6c6c6"/><rect x="273.5" y="76.5" width="42" height="22" fill="#fff" stroke="#c6c6c6"/><path d="M262.8 86.0h5l-2.5 3z" fill="#5f5f5f"/><path d="M305.9 86.0h5l-2.5 3z" fill="#5f5f5f"/><path d="M323 92.8l3.9-9.6h0.6l3.9 9.6M324.5 89.3h5.6" fill="none" stroke="#555" stroke-width="1.5"/><path d="M330 82.8l2.5-2.9 2.5 2.9z" fill="#3f7cc2"/><path d="M345.8 92.8l3-7.3h0.6l3 7.3M347 90h4.4" fill="none" stroke="#555" stroke-width="1.4"/><path d="M352 80h5l-2.5 2.9z" fill="#3f7cc2"/><path d="M231.0 116.5h5l-2.5 3z" fill="#5f5f5f"/><path d="M274.0 116.5h5l-2.5 3z" fill="#5f5f5f"/><path d="M317.0 117.0h5l-2.5 3z" fill="#5f5f5f"/><path d="M351.0 117.0h5l-2.5 3z" fill="#5f5f5f"/><rect x="244" y="108" width="1" height="21" fill="#d5d5d5"/><rect x="287" y="108" width="1" height="21" fill="#d5d5d5"/><rect x="252" y="110" width="15" height="15" fill="#fff"/><rect x="253" y="111" width="1" height="1" fill="#6d6d6d"/><rect x="255" y="111" width="1" height="1" fill="#6d6d6d"/><rect x="257" y="111" width="1" height="1" fill="#6d6d6d"/><rect x="259" y="111" width="1" height="1" fill="#6d6d6d"/><rect x="261" y="111" width="1" height="1" fill="#6d6d6d"/><rect x="263" y="111" width="1" height="1" fill="#6d6d6d"/><rect x="265" y="111" width="1" height="1" fill="#6d6d6d"/><rect x="253" y="113" width="1" height="1" fill="#6d6d6d"/><rect x="259" y="113" width="1" height="1" fill="#6d6d6d"/><rect x="265" y="113" width="1" height="1" fill="#6d6d6d"/><rect x="253" y="115" width="1" height="1" fill="#6d6d6d"/><rect x="259" y="115" width="1" height="1" fill="#6d6d6d"/><rect x="265" y="115" width="1" height="1" fill="#6d6d6d"/><rect x="253" y="117" width="1" height="1" fill="#6d6d6d"/><rect x="255" y="117" width="1" height="1" fill="#6d6d6d"/><rect x="257" y="117" width="1" height="1" fill="#6d6d6d"/><rect x="259" y="117" width="1" height="1" fill="#6d6d6d"/><rect x="261" y="117" width="1" height="1" fill="#6d6d6d"/><rect x="263" y="117" width="1" height="1" fill="#6d6d6d"/><rect x="265" y="117" width="1" height="1" fill="#6d6d6d"/><rect x="253" y="119" width="1" height="1" fill="#6d6d6d"/><rect x="259" y="119" width="1" height="1" fill="#6d6d6d"/><rect x="265" y="119" width="1" height="1" fill="#6d6d6d"/><rect x="253" y="121" width="1" height="1" fill="#6d6d6d"/><rect x="259" y="121" width="1" height="1" fill="#6d6d6d"/><rect x="265" y="121" width="1" height="1" fill="#6d6d6d"/><rect x="253" y="123" width="13" height="1.2" fill="#6d6d6d"/><path d="M302.9 112l5.7 5.7-5.7 5.3-5.7-5.3z" fill="#fff" stroke="#6d6d6d" stroke-width="1"/><path d="M300.5 114.5v-2.5a1.5 1.5 0 0 1 3 0v3.5" fill="none" stroke="#6d6d6d" stroke-width="1"/><path d="M308.5 114.5c1.5 1 2.8 2.2 2.5 4.5l-1.5 2z" fill="#3f7cc2"/><rect x="295" y="122" width="16" height="4" fill="#ffff00"/><path d="M333 122l3.7-10h1.6l3.7 10M334.5 118.5h6" fill="none" stroke="#6d6d6d" stroke-width="1.7"/><rect x="329" y="122" width="16" height="4" fill="#ff0000"/><path d="M353.5 152.5V146.5H359.5" fill="none" stroke="#7a7a7a" stroke-width="1"/><path d="M355.5 148.5L359.5 152.5M359.5 149.5V152.5H356.5" fill="none" stroke="#7a7a7a" stroke-width="1"/><path d="M193.2 113.6h4.6M191 121h4.6M196.2 113.6l-2.8 7.4" fill="none" stroke="#444" stroke-width="1.2"/><path d="M196.2 113.6l-2.8 7.4" stroke="#444" stroke-width="1.4"/><rect x="373" y="79" width="14" height="1" fill="#6d6d6d"/><rect x="374" y="82" width="12" height="1" fill="#6d6d6d"/><rect x="373" y="85" width="14" height="1" fill="#6d6d6d"/><rect x="395" y="83" width="14" height="1" fill="#6d6d6d"/><rect x="396" y="86" width="12" height="1" fill="#6d6d6d"/><rect x="395" y="89" width="14" height="1" fill="#6d6d6d"/><rect x="413" y="76" width="22" height="23" fill="#c6c6c6"/><rect x="417" y="88" width="14" height="1" fill="#6d6d6d"/><rect x="418" y="91" width="12" height="1" fill="#6d6d6d"/><rect x="417" y="94" width="14" height="1" fill="#6d6d6d"/><rect x="373" y="113" width="14" height="1" fill="#6d6d6d"/><rect x="395" y="113" width="14" height="1" fill="#6d6d6d"/><rect x="417" y="113" width="14" height="1" fill="#6d6d6d"/><rect x="373" y="116" width="10" height="1" fill="#6d6d6d"/><rect x="397" y="116" width="10" height="1" fill="#6d6d6d"/><rect x="421" y="116" width="10" height="1" fill="#6d6d6d"/><rect x="373" y="119" width="14" height="1" fill="#6d6d6d"/><rect x="395" y="119" width="14" height="1" fill="#6d6d6d"/><rect x="417" y="119" width="14" height="1" fill="#6d6d6d"/><rect x="373" y="122" width="10" height="1" fill="#6d6d6d"/><rect x="397" y="122" width="10" height="1" fill="#6d6d6d"/><rect x="421" y="122" width="10" height="1" fill="#6d6d6d"/><rect x="439" y="76" width="1" height="22" fill="#d5d5d5"/><rect x="439" y="107" width="1" height="22" fill="#d5d5d5"/><rect x="492" y="75" width="1" height="54" fill="#d5d5d5"/><text x="0" y="0" transform="translate(450.6 91.6) rotate(-45)" font-family="Liberation Sans" font-size="11.5" fill="#6d6d6d" stroke="#6d6d6d" stroke-width="0.35">ab</text><path d="M453.5 93.5l9-9M463 84h-3.5M463 84v3.5" fill="none" stroke="#6d6d6d" stroke-width="1.2"/><path d="M467.1 85.8h5l-2.5 3z" fill="#5f5f5f"/><rect x="447" y="111" width="16" height="1" fill="#6d6d6d"/><rect x="447" y="123" width="16" height="1" fill="#6d6d6d"/><rect x="456" y="114" width="7" height="1" fill="#6d6d6d"/><rect x="456" y="117" width="7" height="1" fill="#6d6d6d"/><rect x="456" y="120" width="7" height="1" fill="#6d6d6d"/><rect x="469" y="111" width="16" height="1" fill="#6d6d6d"/><rect x="469" y="123" width="16" height="1" fill="#6d6d6d"/><rect x="478" y="114" width="7" height="1" fill="#6d6d6d"/><rect x="478" y="117" width="7" height="1" fill="#6d6d6d"/><rect x="478" y="120" width="7" height="1" fill="#6d6d6d"/><path d="M448 117l3.5-3.5v2.5h4v2h-4v2.5z" fill="#3f7cc2"/><path d="M478 117l-3.5-3.5v2.5h-4.5v2h4.5v2.5z" fill="#3f7cc2"/><rect x="500.5" y="79.5" width="9" height="4" fill="#fff" stroke="#6d6d6d"/><rect x="500.5" y="86.5" width="9" height="7" fill="#fff" stroke="#6d6d6d"/><path d="M502 81.5h12M502 88.5h6M502 90.5h6" stroke="#3f7cc2" stroke-width="1"/><path d="M514 83.5v1.5a3.3 3.3 0 0 1 -3.3 3.3h-1.6" fill="none" stroke="#3f7cc2" stroke-width="1.3"/><path d="M512.2 85.9l-2.6 2.4 2.6 2.4" fill="none" stroke="#3f7cc2" stroke-width="1.3"/><rect x="500.5" y="110.5" width="14" height="14" fill="#fff" stroke="#6d6d6d" stroke-width="1.1"/><path d="M500.5 113.5h14M500.5 121.5h14M507.5 110.5v3M507.5 121.5v3" stroke="#6d6d6d" stroke-width="1.1"/><path d="M502.6 117.5h9.8M504.6 115.4l-2 2.1 2 2.1M510.4 115.4l2 2.1-2 2.1" fill="none" stroke="#3f7cc2" stroke-width="1.2"/><path d="M614.0 116.9h5l-2.5 3z" fill="#5f5f5f"/><path d="M617.5 152.5V146.5H623.5" fill="none" stroke="#7a7a7a" stroke-width="1"/><path d="M619.5 148.5L623.5 152.5M623.5 149.5V152.5H620.5" fill="none" stroke="#7a7a7a" stroke-width="1"/><rect x="633.5" y="76.5" width="130" height="22" fill="#fff" stroke="#c6c6c6"/><path d="M753.8 86.0h5l-2.5 3z" fill="#5f5f5f"/><path d="M658.0 116.2h5l-2.5 3z" fill="#5f5f5f"/><rect x="715" y="108" width="1" height="21" fill="#d5d5d5"/><path d="M757.5 152.5V146.5H763.5" fill="none" stroke="#7a7a7a" stroke-width="1"/><path d="M759.5 148.5L763.5 152.5M763.5 149.5V152.5H760.5" fill="none" stroke="#7a7a7a" stroke-width="1"/><circle cx="699.7" cy="116.4" r="2.2" fill="#555"/><path d="M701.9 116.6c0.1 2.1-1.4 3.8-4.3 4.5l-0.3-0.9c1.8-0.6 2.8-1.6 2.8-2.8z" fill="#555"/><path d="M724 114.5l2.5-2.5M724 114.5l2.5 2.5M724 114.5h5" stroke="#3f7cc2" stroke-width="1.3" fill="none"/><text x="729.5" y="117.5" font-family="Liberation Sans" font-size="8.5" font-weight="bold" fill="#555">.0</text><text x="725.5" y="124.5" font-family="Liberation Sans" font-size="8.5" font-weight="bold" fill="#555">.00</text><text x="745" y="117.5" font-family="Liberation Sans" font-size="8.5" font-weight="bold" fill="#555">.00</text><path d="M751.5 121.5l-2.5-2.5M751.5 121.5l-2.5 2.5M751.5 121.5h-6" stroke="#3f7cc2" stroke-width="1.3" fill="none"/><text x="751.5" y="124.5" font-family="Liberation Sans" font-size="8.5" font-weight="bold" fill="#555">.0</text><rect x="795.5" y="73.5" width="27" height="24" fill="#fff" stroke="#7a7a7a"/><path d="M802.5 73.5v24M809 73.5v24M815.5 73.5v24M795.5 79.5h27M795.5 85.5h27M795.5 91.5h27" stroke="#7a7a7a" stroke-width="1" fill="none"/><rect x="802" y="74" width="7" height="5" fill="#d9542b"/><rect x="802" y="80" width="12" height="5" fill="#3f7cc2"/><rect x="802" y="86" width="10" height="5" fill="#d9542b"/><rect x="802" y="92" width="5" height="5" fill="#3f7cc2"/><rect x="808.5" y="89.5" width="17" height="14" fill="#f1f1f1"/><rect x="809.5" y="90.5" width="15" height="12" fill="#fff" stroke="#7a7a7a"/><path d="M813 95.2h7.5M813 98.2h7.5M819 92.8l-4.5 7.6" stroke="#333" stroke-width="1.1"/><rect x="860.5" y="75.5" width="24" height="20" fill="#fff" stroke="#7a7a7a"/><rect x="866" y="80.5" width="18.5" height="15" fill="#bdd3ea"/><path d="M866.5 75.5v20M872.5 75.5v20M878.5 75.5v20M860.5 80.5h24M860.5 85.5h24M860.5 90.5h24" stroke="#7a7a7a" stroke-width="1" fill="none"/><g transform="translate(0 0)"><path d="M881.2 88.1L888.7 80.3V88.3L884.2 92.8Z" fill="#7a7a7a" stroke="#f1f1f1" stroke-width="1"/><path d="M878 92.6L880.7 89.6L883.9 91.8L881.2 95Z" fill="#7a7a7a" stroke="#f1f1f1" stroke-width="1"/><path d="M866.3 102.9C868.8 99.2 871.8 95.6 875.8 94C878.8 92.9 881 95.3 880.2 97.7C879.1 100.6 875.2 102.6 866.3 102.9Z" fill="#3f7cc2" stroke="#f1f1f1" stroke-width="1"/><path d="M874.8 96.3C876 94.8 878.6 94.6 879 96.6C878.7 97.6 878 98.4 877.2 98.8C876.8 97.6 876 96.6 874.8 96.3Z" fill="#fff"/></g><rect x="910.5" y="73.5" width="25" height="21" fill="#fff" stroke="#7a7a7a"/><rect x="915.5" y="78.5" width="14" height="10" fill="#bdd3ea"/><path d="M915.5 73.5v21M929.5 73.5v21M910.5 78.5h25M910.5 88.5h25" stroke="#7a7a7a" stroke-width="1" fill="none"/><g transform="translate(50.2 -2)"><path d="M881.2 88.1L888.7 80.3V88.3L884.2 92.8Z" fill="#7a7a7a" stroke="#f1f1f1" stroke-width="1"/><path d="M878 92.6L880.7 89.6L883.9 91.8L881.2 95Z" fill="#7a7a7a" stroke="#f1f1f1" stroke-width="1"/><path d="M866.3 102.9C868.8 99.2 871.8 95.6 875.8 94C878.8 92.9 881 95.3 880.2 97.7C879.1 100.6 875.2 102.6 866.3 102.9Z" fill="#3f7cc2" stroke="#f1f1f1" stroke-width="1"/><path d="M874.8 96.3C876 94.8 878.6 94.6 879 96.6C878.7 97.6 878 98.4 877.2 98.8C876.8 97.6 876 96.6 874.8 96.3Z" fill="#fff"/></g><path d="M837.2 127.19999999999999h5l-2.5 3z" fill="#5f5f5f"/><path d="M887.4 127.19999999999999h5l-2.5 3z" fill="#5f5f5f"/><path d="M936.5 127.19999999999999h5l-2.5 3z" fill="#5f5f5f"/><rect x="962.5" y="73.5" width="14" height="5" fill="#fff" stroke="#7a7a7a" stroke-width="1.1"/><path d="M969.5 73.5v5" stroke="#7a7a7a"/><rect x="973.5" y="81.5" width="14" height="5" fill="#bdd3ea" stroke="#7a7a7a" stroke-width="1.1"/><path d="M980.5 81.5v5" stroke="#7a7a7a"/><rect x="962.5" y="89.5" width="14" height="10" fill="#fff" stroke="#7a7a7a"/><path d="M969.5 89.5v10M962.5 94.5h14" stroke="#7a7a7a"/><path d="M966.5 81.3l-2.8 2.7 2.8 2.7M964 84h5" fill="none" stroke="#3f7cc2" stroke-width="1.8"/><rect x="1003.5" y="73.5" width="14" height="5" fill="#fff" stroke="#7a7a7a" stroke-width="1.1"/><path d="M1010.5 73.5v5" stroke="#7a7a7a"/><path d="M1009.5 81.5h11l-1 5h-10z" fill="#bdd3ea"/><path d="M1017.5 81.5h-8v5h8M1016.7 81.5v5" fill="none" stroke="#7a7a7a" stroke-width="1.1"/><path d="M1015.5 90.5h-12v10h14v-8" fill="#fff" stroke="#7a7a7a" stroke-width="1.1"/><path d="M1010.5 90.5v10M1003.5 95.5h14" stroke="#7a7a7a"/><path d="M1018.4 78.6L1031.7 91.4M1032 79.2L1017.8 90.8" stroke="#f1f1f1" stroke-width="3.6"/><path d="M1018.2 78.6C1023 82 1028 86.5 1031.7 91.6C1027 88 1022.5 84 1018.2 78.6Z" stroke="#d9542b" stroke-width="2" fill="#d9542b" stroke-linejoin="round"/><path d="M1032.2 79.2C1027 82 1022 86 1017.8 91C1022.5 88.5 1027.5 84.5 1032.2 79.2Z" stroke="#d9542b" stroke-width="2" fill="#d9542b" stroke-linejoin="round"/><path d="M1045.5 72.2v4.6M1067.5 72.2v4.6M1047 74.5h19M1047 74.5l2.3-2.2M1047 74.5l2.3 2.2M1066 74.5l-2.3-2.2M1066 74.5l-2.3 2.2" stroke="#3f7cc2" stroke-width="1.1" fill="none"/><rect x="1045.7" y="78.5" width="26.8" height="20" fill="#fff" stroke="#7a7a7a" stroke-width="1.2"/><path d="M1052.5 78.5v20M1060.5 78.5v20M1067.5 78.5v20M1045.7 83.5h26.8M1045.7 93.5h26.8" stroke="#a8a8a8" stroke-width="1" fill="none"/><rect x="1053" y="84" width="7" height="9" fill="#3f7cc2"/><path d="M1045.7 98.5v3.6h5.6l2-2.2M1054.3 98.5v3.6h8l2.5-3.6" fill="#fff" stroke="#7a7a7a" stroke-width="1.1"/><path d="M972.1 127.5h5l-2.5 3z" fill="#5f5f5f"/><path d="M1014.0 127.5h5l-2.5 3z" fill="#5f5f5f"/><path d="M1057.1 127.5h5l-2.5 3z" fill="#5f5f5f"/><path d="M1093 70.8H1108.2V74H1106.6V73H1097.6L1103 78.5L1097.4 84H1106.6V83H1108.2V86.2H1093V84.4L1099.4 78.5L1093 72.6Z" fill="#444"/><path d="M1172.0 77.6h5l-2.5 3z" fill="#5f5f5f"/><rect x="1094.5" y="94.5" width="13" height="15" fill="#fff" stroke="#7a7a7a"/><rect x="1094" y="94" width="14" height="3.7" fill="#7a7a7a"/><path d="M1101.2 99v8M1097.4 103.6l3.8 3.8 3.8-3.8" fill="none" stroke="#3f7cc2" stroke-width="2"/><path d="M1130.0 100.9h5l-2.5 3z" fill="#5f5f5f"/><path d="M1103.2 117.6a1.2 1.2 0 0 1 1.7 0l2.2 2.2a1.2 1.2 0 0 1 0 1.7l-8.6 8.6a1.2 1.2 0 0 1 -1.7 0l-2.2-2.2a1.2 1.2 0 0 1 0-1.7z" fill="#e27b8f"/><path d="M1096.3 124.3l4.1 4.1" stroke="#f1f1f1" stroke-width="1.1"/><path d="M1142.0 123.7h5l-2.5 3z" fill="#5f5f5f"/><path d="M1189.2 85.8L1193.6 74.6L1198 85.8M1190.8 81.6H1196.4" fill="none" stroke="#3f7cc2" stroke-width="2" stroke-linejoin="bevel"/><path d="M1189.4 89H1198L1189.6 99H1198.4" fill="none" stroke="#9b59c5" stroke-width="2"/><path d="M1200.2 80.9H1217L1210.2 88.4V95.7H1206.6V88.4Z" fill="#7a7a7a"/><path d="M1202.6 81.8L1208.4 87.4V95" fill="none" stroke="#fff" stroke-width="1"/><path d="M1214.9 128.1h5l-2.5 3z" fill="#5f5f5f"/><circle cx="1249.1" cy="82.8" r="8.9" fill="#fff" stroke="#3f7cc2" stroke-width="1.9"/><path d="M1243 89.8l-8.7 8.3" stroke="#3f7cc2" stroke-width="3.2" stroke-linecap="round"/><path d="M1259.9 128.1h5l-2.5 3z" fill="#5f5f5f"/><path d="M1346.5 152l4.5-4.5 4.5 4.5" fill="none" stroke="#666" stroke-width="1.5"/><path d="M92.5 178.5h7l-3.5 4z" fill="#666"/><rect x="121.5" y="176" width="1.2" height="1.4" fill="#999"/><rect x="121.5" y="180" width="1.2" height="1.4" fill="#999"/><rect x="121.5" y="184" width="1.2" height="1.4" fill="#999"/><path d="M150.5 176l10 10M160.5 176l-10 10" stroke="#c0c0c0" stroke-width="1.3"/><path d="M186.2 180.6l3.8 3.8 6.6-7.4" fill="none" stroke="#c8c8c8" stroke-width="2.3"/><text x="222.2" y="184.6" font-family="Liberation Serif" font-style="italic" font-weight="bold" font-size="14" fill="#555">f</text><text x="227.6" y="184.3" font-family="Liberation Serif" font-style="italic" font-weight="bold" font-size="10.5" fill="#555">x</text><path d="M1347 178.5l4 4 4-4" fill="none" stroke="#666" stroke-width="1.5"/><path d="M22 208.5v11.5h-11.5z" fill="#b4b4b4"/><path d="M1351.8 215.6h7.4l-3.7-3.7z" fill="#666"/><path d="M1351.8 668.6h7.4l-3.7 3.7z" fill="#666"/><path d="M847 688.5v7l-4-3.5z" fill="#666"/><path d="M1333 688.5v7l4-3.5z" fill="#666"/><rect x="819.5" y="688" width="1.4" height="1.6" fill="#aaa"/><rect x="819.5" y="692" width="1.4" height="1.6" fill="#aaa"/><rect x="819.5" y="696" width="1.4" height="1.6" fill="#aaa"/><path d="M31 688v6.5l-3.5-3.25z" fill="#c0c0c0"/><path d="M57 688v6.5l3.5-3.25z" fill="#c0c0c0"/><circle cx="224" cy="692" r="7.2" fill="none" stroke="#777" stroke-width="1.1"/><path d="M220 692h8M224 688v8" stroke="#777" stroke-width="1.6"/><path d="M59.8 714v8.3h11v-10.8h-5" fill="none" stroke="#555" stroke-width="1.2"/><rect x="65.5" y="711" width="5.5" height="2.5" fill="#555"/><circle cx="61" cy="713" r="2.8" fill="#555"/><path d="M61 717.2h9M61 719.6h9M61 722h9" stroke="#555" stroke-width="1" stroke-dasharray="2.2 0.8"/><rect x="1086.5" y="710.5" width="12" height="12" fill="none" stroke="#666"/><path d="M1090.5 710.5v12M1094.5 710.5v12M1086.5 714.5h12M1086.5 718.5h12" stroke="#666"/><rect x="1124.5" y="710.5" width="13" height="12" fill="none" stroke="#666"/><rect x="1127.5" y="712.5" width="7" height="8" fill="none" stroke="#666"/><path d="M1129 714.5h4M1129 716.5h4M1129 718.5h4" stroke="#666"/><rect x="1162.5" y="710.5" width="13" height="12" fill="none" stroke="#666"/><path d="M1162.5 717.5h8v-7M1166.5 710.5v7" fill="none" stroke="#666"/><rect x="1193" y="716" width="5" height="2" fill="#555"/><rect x="1203" y="716.5" width="100" height="1" fill="#aaa"/><rect x="1251" y="711" width="4" height="11" fill="#555"/><path d="M1307 717h8M1311 713v8" stroke="#555" stroke-width="2"/></svg>
<div class="t" style="left:11.60px;top:108.42px;font-size:12.5px;line-height:12.5px;color:#444444;transform:scaleX(0.8576);transform-origin:0 0;">Paste</div>
<div class="t" style="left:68.50px;top:74.42px;font-size:12.5px;line-height:12.5px;color:#444444;transform:scaleX(0.9512);transform-origin:0 0;">Cut</div>
<div class="t" style="left:68.50px;top:97.42px;font-size:12.5px;line-height:12.5px;color:#444444;transform:scaleX(0.9418);transform-origin:0 0;">Copy</div>
<div class="t" style="left:68.50px;top:120.42px;font-size:12.5px;line-height:12.5px;color:#444444;transform:scaleX(0.9377);transform-origin:0 0;">Format Painter</div>
<div class="t" style="left:45.50px;top:143.91px;font-size:11.8px;line-height:11.8px;color:#666666;transform:scaleX(0.9901);transform-origin:0 0;">Clipboard</div>
<div class="t" style="left:165.50px;top:82.42px;font-size:12.5px;line-height:12.5px;color:#444444;transform:scaleX(0.9027);transform-origin:0 0;">Calibri</div>
<div class="t" style="left:275.80px;top:82.42px;font-size:12.5px;line-height:12.5px;color:#444444;transform:scaleX(0.7846);transform-origin:0 0;">11</div>
<div class="t" style="left:169.00px;top:111.92px;font-size:12.5px;line-height:12.5px;color:#444444;font-weight:bold;transform:scaleX(0.7735);transform-origin:0 0;">B</div>
<div class="t" style="left:213.00px;top:111.92px;font-size:12.5px;line-height:12.5px;color:#444444;font-weight:bold;transform:scaleX(0.8287);transform-origin:0 0;">U</div>
<div style="left:212px;top:123px;width:9px;height:1.3px;background:#444444;"></div>
<div class="t" style="left:241.60px;top:143.91px;font-size:11.8px;line-height:11.8px;color:#666666;transform:scaleX(0.9788);transform-origin:0 0;">Font</div>
<div class="t" style="left:519.20px;top:82.12px;font-size:12.5px;line-height:12.5px;color:#444444;transform:scaleX(0.9391);transform-origin:0 0;">Wrap Text</div>
<div class="t" style="left:519.20px;top:113.42px;font-size:12.5px;line-height:12.5px;color:#444444;transform:scaleX(0.9575);transform-origin:0 0;">Merge &amp; Center</div>
<div class="t" style="left:462.30px;top:143.91px;font-size:11.8px;line-height:11.8px;color:#666666;">Alignment</div>
<div class="t" style="left:636.50px;top:82.42px;font-size:12.5px;line-height:12.5px;color:#444444;transform:scaleX(0.8886);transform-origin:0 0;">General</div>
<div class="t" style="left:640.90px;top:110.06px;font-size:16px;line-height:16px;color:#444444;transform:scaleX(0.8202);transform-origin:0 0;font-family:"Liberation Serif",serif;">$</div>
<div class="t" style="left:672.30px;top:111.23px;font-size:16.5px;line-height:16.5px;color:#444444;transform:scaleX(0.8532);transform-origin:0 0;">%</div>
<div class="t" style="left:670.70px;top:143.91px;font-size:11.8px;line-height:11.8px;color:#666666;transform:scaleX(0.9583);transform-origin:0 0;">Number</div>
<div class="t" style="left:778.60px;top:108.42px;font-size:12.5px;line-height:12.5px;color:#444444;transform:scaleX(0.9736);transform-origin:0 0;">Conditional</div>
<div class="t" style="left:775.40px;top:124.02px;font-size:12.5px;line-height:12.5px;color:#444444;transform:scaleX(0.9674);transform-origin:0 0;">Formatting</div>
<div class="t" style="left:847.50px;top:108.42px;font-size:12.5px;line-height:12.5px;color:#444444;transform:scaleX(0.9138);transform-origin:0 0;">Format as</div>
<div class="t" style="left:856.20px;top:124.02px;font-size:12.5px;line-height:12.5px;color:#444444;transform:scaleX(0.9298);transform-origin:0 0;">Table</div>
<div class="t" style="left:913.70px;top:108.42px;font-size:12.5px;line-height:12.5px;color:#444444;transform:scaleX(0.8817);transform-origin:0 0;">Cell</div>
<div class="t" style="left:904.20px;top:124.02px;font-size:12.5px;line-height:12.5px;color:#444444;transform:scaleX(0.8781);transform-origin:0 0;">Styles</div>
<div class="t" style="left:844.30px;top:143.91px;font-size:11.8px;line-height:11.8px;color:#666666;transform:scaleX(0.8771);transform-origin:0 0;">Styles</div>
<div class="t" style="left:959.80px;top:108.12px;font-size:12.5px;line-height:12.5px;color:#444444;transform:scaleX(0.9312);transform-origin:0 0;">Insert</div>
<div class="t" style="left:1000.60px;top:108.12px;font-size:12.5px;line-height:12.5px;color:#444444;transform:scaleX(0.8963);transform-origin:0 0;">Delete</div>
<div class="t" style="left:1040.50px;top:108.12px;font-size:12.5px;line-height:12.5px;color:#444444;transform:scaleX(0.9470);transform-origin:0 0;">Format</div>
<div class="t" style="left:1005.60px;top:143.91px;font-size:11.8px;line-height:11.8px;color:#666666;transform:scaleX(0.8762);transform-origin:0 0;">Cells</div>
<div class="t" style="left:1112.50px;top:74.22px;font-size:12.5px;line-height:12.5px;color:#444444;transform:scaleX(0.9494);transform-origin:0 0;">AutoSum</div>
<div class="t" style="left:1112.50px;top:96.92px;font-size:12.5px;line-height:12.5px;color:#444444;transform:scaleX(0.9028);transform-origin:0 0;">Fill</div>
<div class="t" style="left:1112.50px;top:119.62px;font-size:12.5px;line-height:12.5px;color:#444444;transform:scaleX(0.8978);transform-origin:0 0;">Clear</div>
<div class="t" style="left:1186.20px;top:108.32px;font-size:12.5px;line-height:12.5px;color:#444444;transform:scaleX(0.9727);transform-origin:0 0;">Sort &amp;</div>
<div class="t" style="left:1186.70px;top:124.02px;font-size:12.5px;line-height:12.5px;color:#444444;transform:scaleX(0.9065);transform-origin:0 0;">Filter</div>
<div class="t" style="left:1228.30px;top:108.32px;font-size:12.5px;line-height:12.5px;color:#444444;transform:scaleX(0.9848);transform-origin:0 0;">Find &amp;</div>
<div class="t" style="left:1226.20px;top:124.02px;font-size:12.5px;line-height:12.5px;color:#444444;transform:scaleX(0.8950);transform-origin:0 0;">Select</div>
<div class="t" style="left:1160.30px;top:143.91px;font-size:11.8px;line-height:11.8px;color:#666666;">Editing</div>
<svg style="position:absolute;left:0;top:0" width="1365" height="729" viewBox="0 0 1365 729"><circle cx="189" cy="571.8" r="83.8" fill="#548235"/><circle cx="189" cy="571.8" r="65" fill="#fff"/><circle cx="189" cy="571.8" r="61.2" fill="#c55a11"/><path d="M115.13 582.18A74.6 74.6 0 0 0 262.87 582.18" fill="none" stroke="#fff" stroke-width="1.6"/><defs><path id="arc" d="M140.07 620.73A69.2 69.2 0 1 1 237.93 620.73"/></defs><text font-family="Liberation Sans" font-weight="bold" font-size="14.8" fill="#fff"><textPath href="#arc" startOffset="50%" text-anchor="middle" textLength="217" lengthAdjust="spacing">THE EXCEL CHALLENGE</textPath></text><g transform="translate(-1.6 1.6)" stroke="#8a3c0e" stroke-width="6.6" stroke-linecap="round" stroke-linejoin="round" fill="none"><path d="M138.8 562.6H154.6M146.9 562.6V583.4"/><path d="M181.2 562.6H166.9V583.4H181.2M166.9 573H180"/><path d="M211.5 564.8A10.6 10.6 0 1 0 211.5 581.5"/><path d="M223 562.6V583.4M239.8 562.6V583.4M223 573H239.8"/></g><g transform="translate(-1.6 1.6)" fill="#8a3c0e"><circle cx="157.9" cy="575.5" r="2.1"/><circle cx="187.9" cy="575.5" r="2.1"/></g><g transform="translate(0 0)" stroke="#fff" stroke-width="6.6" stroke-linecap="round" stroke-linejoin="round" fill="none"><path d="M138.8 562.6H154.6M146.9 562.6V583.4"/><path d="M181.2 562.6H166.9V583.4H181.2M166.9 573H180"/><path d="M211.5 564.8A10.6 10.6 0 1 0 211.5 581.5"/><path d="M223 562.6V583.4M239.8 562.6V583.4M223 573H239.8"/></g><g transform="translate(0 0)" fill="#fff"><circle cx="157.9" cy="575.5" r="2.1"/><circle cx="187.9" cy="575.5" r="2.1"/></g></svg>
</body></html>
